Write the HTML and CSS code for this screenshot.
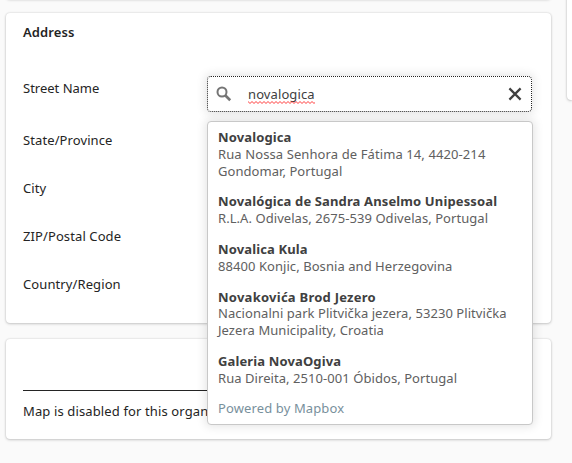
FILE: index.html
```html
<!DOCTYPE html>
<html lang="en">
<head>
<meta charset="utf-8">
<title>Address</title>
<link rel="stylesheet" href="styles.css">
</head>
<body>
<div class="page">
  <main class="column">
    <section class="card card-previous"></section>
    <section class="card card-address">
      <h2 class="title">Address</h2>
      <div class="field field-street">
        <span class="label">Street Name</span>
        <div class="geocoder">
          <div class="search">
            <svg class="icon-search" width="16" height="16" viewBox="0 0 16 16"><circle cx="6" cy="6" r="4.5" fill="none" stroke="#757575" stroke-width="2"/><path d="M9.2 9.2L14.2 14.2" stroke="#757575" stroke-width="2.7"/></svg>
            <span class="query">novalogica<svg class="squiggle" width="67" height="3"><defs><pattern id="wave" width="4" height="3" patternUnits="userSpaceOnUse"><path d="M-1 1L0 0L2 2L4 0L5 1" transform="translate(0 .5)" fill="none" stroke="#f22" stroke-width=".9"/></pattern></defs><rect width="67" height="3" fill="url(#wave)"/></svg></span>
            <svg class="icon-close" width="14" height="14" viewBox="0 0 14 14"><path d="M1.4 1.4L12.6 12.6M12.6 1.4L1.4 12.6" stroke="#404040" stroke-width="2.2"/></svg>
          </div>
          <div class="suggestions">
            <ul class="list">
              <li class="item"><b class="name">Novalogica</b><span class="place place-wide">Rua Nossa Senhora de Fátima 14, 4420-214</span><span class="place">Gondomar, Portugal</span></li>
              <li class="item"><b class="name">Novalógica de Sandra Anselmo Unipessoal</b><span class="place">R.L.A. Odivelas, 2675-539 Odivelas, Portugal</span></li>
              <li class="item"><b class="name">Novalica Kula</b><span class="place">88400 Konjic, Bosnia and Herzegovina</span></li>
              <li class="item"><b class="name name-wide">Novakovića Brod Jezero</b><span class="place">Nacionalni park Plitvička jezera, 53230 Plitvička</span><span class="place">Jezera Municipality, Croatia</span></li>
              <li class="item"><b class="name">Galeria NovaOgiva</b><span class="place">Rua Direita, 2510-001 Óbidos, Portugal</span></li>
            </ul>
            <a class="powered">Powered by Mapbox</a>
          </div>
        </div>
      </div>
      <div class="field"><span class="label">State/Province</span></div>
      <div class="field"><span class="label">City</span></div>
      <div class="field"><span class="label">ZIP/Postal Code</span></div>
      <div class="field"><span class="label">Country/Region</span></div>
    </section>
    <section class="card card-map">
      <div class="map-note"><span class="map-text">Map is disabled for this organ</span></div>
    </section>
  </main>
  <aside class="card card-side"></aside>
</div>
</body>
</html>
```
FILE: styles.css
```css
* { box-sizing: border-box; }
body {
  margin: 0;
  height: 463px;
  overflow: hidden;
  background: #fafafa;
  color: #242424;
  font: 13px/20px "Noto Sans", "Open Sans", sans-serif;
}
.page { display: grid; grid-template-columns: 545px 1fr; column-gap: 16px; padding-left: 6px; align-items: start; }
.card { background: #fff; border-radius: 4px; box-shadow: 0 0 2px rgba(0,0,0,.16), 0 1px 3px rgba(0,0,0,.18); }
.card-previous { height: 10px; margin-top: -11px; }
.card-address { height: 310px; margin-top: 14px; padding: 9px 19px 0 17px; }
.card-map { height: 100px; margin-top: 16px; padding: 51px 19px 0 17px; }
.card-side { height: 120px; margin-top: -20px; border-radius: 4px 0 0 4px; }
.title { margin: 0 0 22px; font-size: 13px; line-height: 20px; font-weight: 600; letter-spacing: .1px; }
.field { display: grid; grid-template-columns: 184px 325px; height: 48px; align-items: center; white-space: nowrap; letter-spacing: .1px; }
.field-street { height: 52px; align-items: start; }
.field-street > .label { padding-top: 14px; letter-spacing: 0; }
.geocoder { position: relative; margin-top: 12px; }
.search { display: flex; align-items: center; height: 36px; padding: 0 10px 0 8px; border: 1px dotted #242424; border-radius: 4px; background: #fff; box-shadow: 0 0 10px 2px rgba(0,0,0,.1); }
.icon-search { flex: none; }
.query { position: relative; margin-left: 16px; color: #404040; }
.squiggle { position: absolute; left: 0; top: 17px; }
.icon-close { margin-left: auto; flex: none; margin-right: -1px; }
.suggestions { position: absolute; z-index: 2; left: 0; top: 45px; width: 326px; height: 304px; padding: 0 10px; background: #fff; border: 1px solid #c8c8c8; border-radius: 4px; box-shadow: 0 0 10px 2px rgba(0,0,0,.1); color: #404040; line-height: 16.8px; }
.list { margin: 0; padding: 0; list-style: none; }
.item { padding: 7px 0; }
.name, .place { display: block; }
.name { font-weight: 700; letter-spacing: .13px; }
.name-wide { letter-spacing: .25px; }
.place { color: #606060; letter-spacing: .06px; }
.place-wide { letter-spacing: .1px; }
.powered { display: block; padding-top: 6px; color: #78909c; letter-spacing: .12px; }
.map-note { border-top: 1px solid #242424; padding-top: 10px; white-space: nowrap; }
.map-text { letter-spacing: .13px; }
```
